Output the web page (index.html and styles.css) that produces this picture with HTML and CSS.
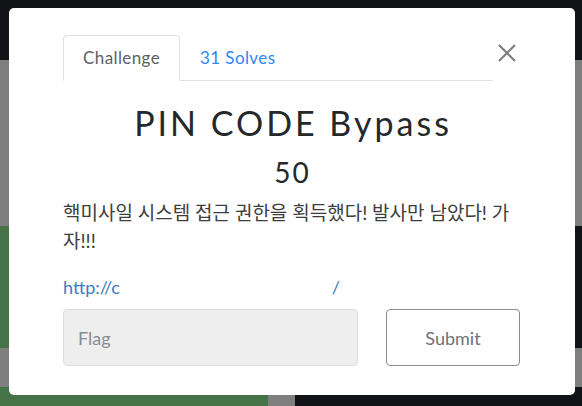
FILE: index.html
```html
<!DOCTYPE html>
<html lang="ko">
<head>
<meta charset="utf-8">
<title>PIN CODE Bypass</title>
<link rel="stylesheet" href="styles.css">
</head>
<body>
<div class="page">
  <header class="navbar"></header>
  <main class="board">
    <div class="grid">
      <div class="chal solved"></div>
      <div class="chal open"></div>
      <div class="chal solved"></div>
      <div class="chal open"></div>
    </div>
  </main>

  <div class="modal" role="dialog">
    <div class="modal-head">
      <ul class="tabs">
        <li class="tab active">Challenge</li>
        <li class="tab link-tab">31 Solves</li>
      </ul>
      <button class="close" aria-label="Close">
        <svg width="18" height="18" viewBox="0 0 18 18"><path d="M1 1 L17 17 M17 1 L1 17" stroke="#7b7b7b" stroke-width="2" fill="none"/></svg>
      </button>
    </div>
    <h3 class="title">PIN CODE Bypass</h3>
    <div class="points">50</div>
    <p class="desc">핵미사일 시스템 접근 권한을 획득했다! 발사만 남았다! 가자!!!</p>
    <p class="url"><a href="#">http://c<span class="redact"></span>/</a></p>
    <form class="submit-row">
      <input class="flag" type="text" placeholder="Flag">
      <button class="submit" type="button">Submit</button>
    </form>
  </div>
</div>
</body>
</html>
```
FILE: styles.css
```css
* { box-sizing: border-box; }
html, body { margin: 0; padding: 0; }
body {
  width: 582px;
  height: 406px;
  overflow: hidden;
  background: #7f7f7f;
  font-family: Lato, "Noto Sans CJK KR", sans-serif;
}
.page { position: relative; width: 582px; height: 406px; overflow: hidden; }
.navbar { height: 60px; background: #121316; }
.board { padding-top: 166px; }
.grid {
  display: grid;
  grid-template-columns: 268px 1fr;
  grid-template-rows: 122px 19px;
  column-gap: 27px;
  row-gap: 39px;
}
.chal.solved { background: #457246; }
.chal.open { background: #121316; }

.modal {
  position: absolute;
  left: 9px;
  top: 8px;
  width: 566px;
  height: 387px;
  background: #fff;
  border-radius: 5px;
  padding: 27px 55px 0 54px;
}
.modal-head { display: flex; align-items: flex-start; }
.tabs {
  flex: 1;
  display: flex;
  margin: 0;
  padding: 0;
  list-style: none;
  border-bottom: 1px solid #dee2e6;
}
.tab {
  height: 46px;
  padding: 0 19px;
  font-size: 17px;
  letter-spacing: 0.4px;
  line-height: 44px;
  border: 1px solid transparent;
  border-top-left-radius: 4px;
  border-top-right-radius: 4px;
  margin-bottom: -1px;
}
.tab.active {
  color: #5d6267;
  border-color: #dee2e6 #dee2e6 #fff;
  background: #fff;
}
.tab.link-tab { color: #2f86f6; }
.close {
  width: 27px;
  height: 27px;
  margin-top: 4px;
  padding: 0;
  border: 0;
  background: none;
  display: flex;
  justify-content: center;
  align-items: center;
}
.title {
  margin: 22px 0 0;
  padding-left: 3px;
  text-align: center;
  font-size: 34px;
  line-height: 40px;
  font-weight: 400;
  color: #25282b;
  letter-spacing: 3px;
}
.points {
  margin-top: 12px;
  padding-left: 2px;
  text-align: center;
  font-size: 28px;
  line-height: 34px;
  letter-spacing: 2px;
  color: #25282b;
}
.desc {
  margin: 10px 0 0;
  font-size: 19px;
  line-height: 28px;
  color: #3d3d3d;
}
.url {
  margin: 18px 0 0;
  font-size: 18px;
  line-height: 28px;
}
.url a { color: #3d7fc2; text-decoration: none; }
.redact { display: inline-block; width: 212px; height: 1px; }
.submit-row {
  margin-top: 8px;
  display: flex;
  gap: 28px;
}
.flag {
  width: 295px;
  height: 57px;
  background: #eeeeee;
  border: 1px solid #dcdfe2;
  border-radius: 4px;
  padding: 0 14px;
  font-family: Lato, sans-serif;
  font-size: 18px;
  color: #333;
}
.flag::placeholder { color: #878c92; }
.submit {
  width: 134px;
  height: 57px;
  background: #fff;
  border: 1px solid #868c92;
  border-radius: 4px;
  font-family: Lato, sans-serif;
  font-size: 18px;
  color: #6c737a;
}
```
